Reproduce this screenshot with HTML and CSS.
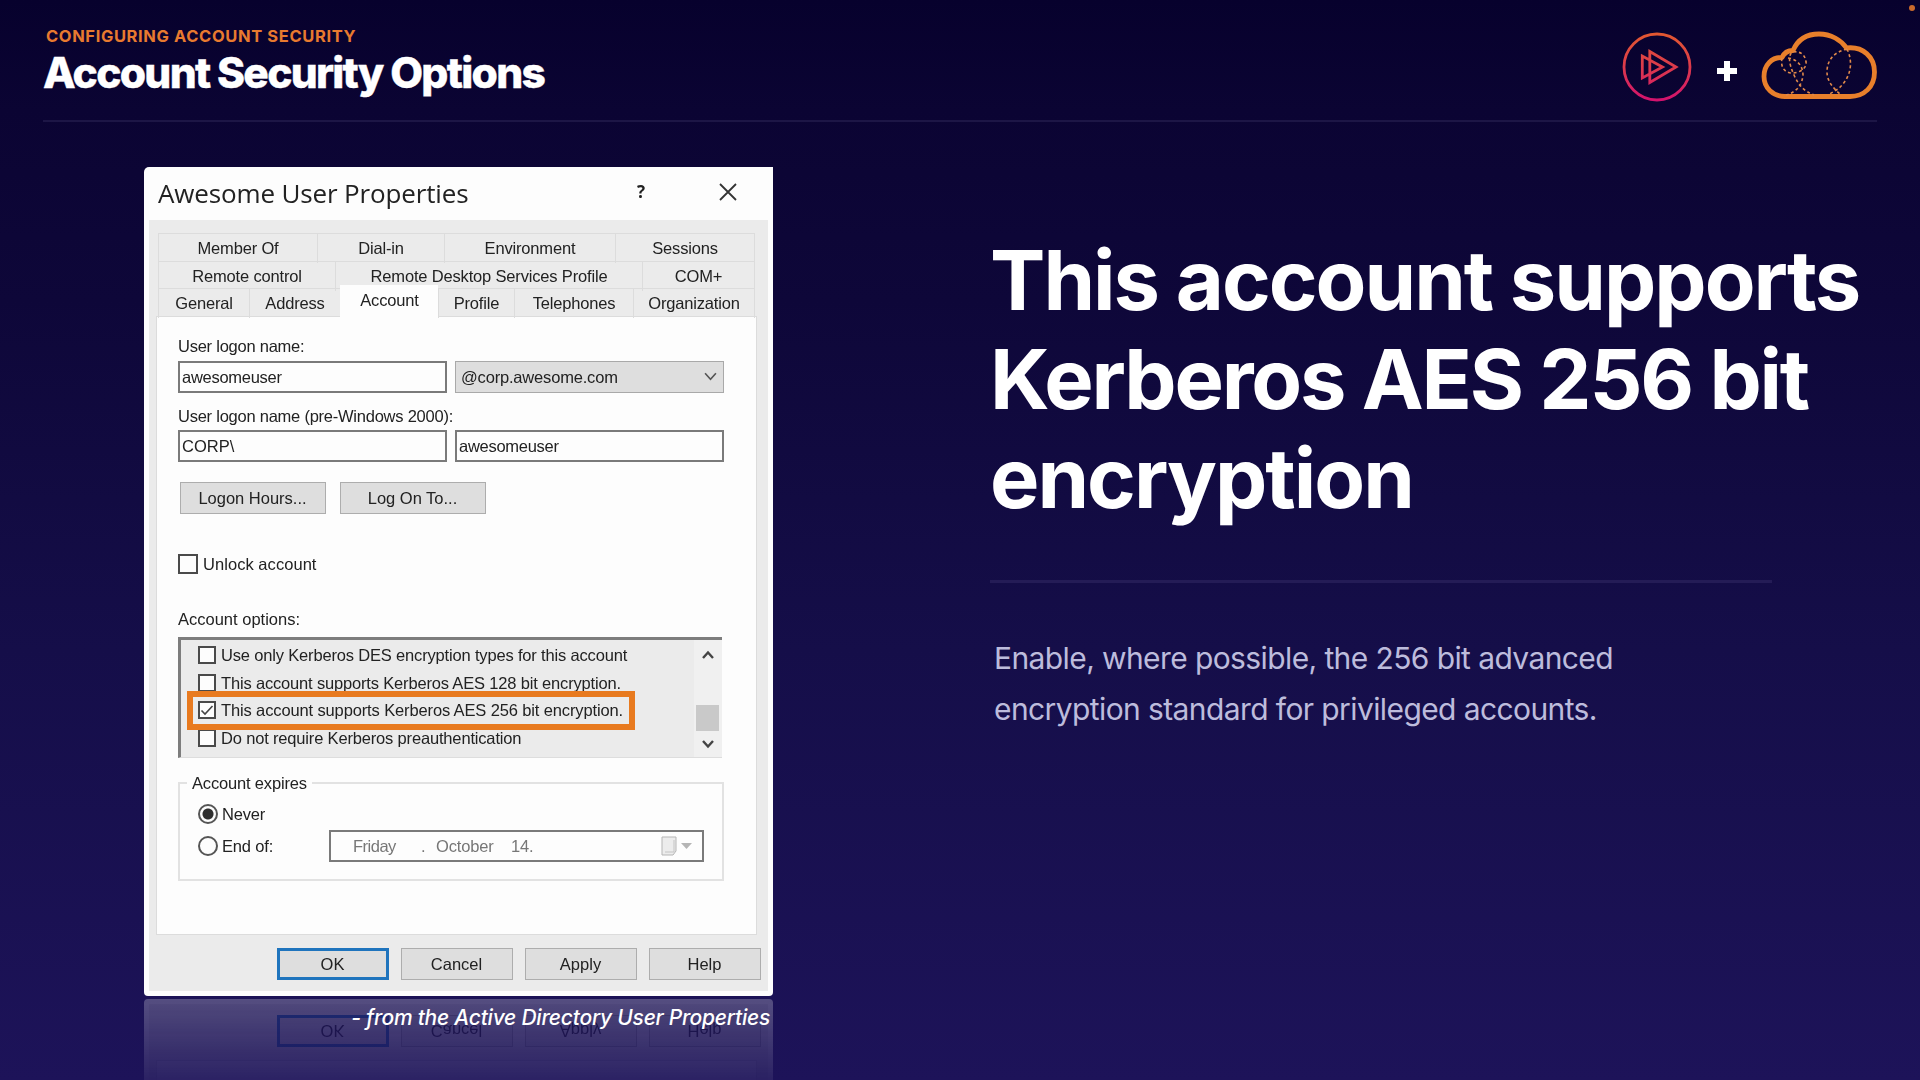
FILE: index.html
```html
<!DOCTYPE html>
<html lang="en">
<head>
<meta charset="utf-8">
<title>Account Security Options</title>
<link rel="stylesheet" href="styles.css">
</head>
<body>
<div class="slide">
  <header class="header">
    <div class="heading">
      <p class="eyebrow">CONFIGURING ACCOUNT SECURITY</p>
      <h1 class="title">Account Security Options</h1>
    </div>
    <div class="logos">
      <svg class="logo-play" viewBox="0 0 70 70">
        <defs><linearGradient id="play" x1="0" y1="0" x2="0" y2="70" gradientUnits="userSpaceOnUse"><stop offset="0" stop-color="#e2592f"/><stop offset=".5" stop-color="#dc3a4c"/><stop offset="1" stop-color="#d3106f"/></linearGradient></defs>
        <g fill="none" stroke="url(#play)" stroke-width="2.8"><circle cx="35" cy="35" r="33"/><path d="M27.800 19.500V50.500L54 35ZM20.300 24V46L40.500 35Z"/></g>
      </svg>
      <svg class="logo-plus" viewBox="0 0 20 20"><path d="M7 0h6v7h7v6h-7v7H7v-7H0V7h7z" fill="#fff"/></svg>
      <svg class="logo-cloud" viewBox="0 0 116 70">
        <path d="M24 65.500C12 65.500 3 57 3 45.500C3 34 11 26 21 26.500C23 22 27 19.500 32 19.500C37 8 46 3 58 3C70 3 80 9 85.500 17C102 15 113.500 26 113.500 41C113.500 56 103 65.500 89 65.500Z" fill="none" stroke="#e87f2b" stroke-width="4.800" stroke-linejoin="round"/>
        <g fill="none" stroke="#e0894a" stroke-width="1.600" stroke-dasharray="3 2.600"><path d="M21 27C19 36 24 42 31 42C39 42 46 37 45 31C44 23 39 20 31 21C27 25 28 33 33 44C38 55 43 60 53 64"/><path d="M27 27C36 28 42 35 42 44C41 54 36 61 25 64"/><path d="M86 18C73 21 66 29 66 41C66 50 72 57 80 64"/><path d="M86 18C92 30 91 46 77 58L67 64"/></g>
      </svg>
    </div>
    <i class="corner-dot"></i>
  </header>

  <main class="content">
    <figure class="shot">
      <div class="dialog">
        <div class="titlebar">
          <span class="dialog-title">Awesome User Properties</span>
          <b class="help">?</b>
          <svg class="close" viewBox="0 0 18 18"><path d="M1 1L17 17M17 1L1 17" stroke="#333" stroke-width="1.800"/></svg>
        </div>
        <div class="dialog-body">
          <div class="tabs">
            <div class="tab-row row-a"><span>Member Of</span><span>Dial-in</span><span>Environment</span><span>Sessions</span></div>
            <div class="tab-row row-b"><span>Remote control</span><span>Remote Desktop Services Profile</span><span>COM+</span></div>
            <div class="tab-row row-c"><span>General</span><span>Address</span><span class="active">Account</span><span>Profile</span><span>Telephones</span><span>Organization</span></div>
          </div>
          <div class="panel">
            <p class="label label-first">User logon name:</p>
            <div class="fields">
              <div class="field"><span>awesomeuser</span></div>
              <div class="field select"><span>@corp.awesome.com</span><svg viewBox="0 0 12 8"><path d="M1 1l5 5.500L11 1" fill="none" stroke="#555" stroke-width="1.500"/></svg></div>
            </div>
            <p class="label label-second">User logon name (pre-Windows 2000):</p>
            <div class="fields">
              <div class="field"><span class="corp">CORP\</span></div>
              <div class="field"><span>awesomeuser</span></div>
            </div>
            <div class="small-buttons"><div class="btn">Logon Hours...</div><div class="btn">Log On To...</div></div>
            <div class="unlock"><i class="check big"></i><span>Unlock account</span></div>
            <p class="label-options">Account options:</p>
            <div class="options">
              <div class="option-list">
                <div class="option"><i class="check"></i><span>Use only Kerberos DES encryption types for this account</span></div>
                <div class="option"><i class="check"></i><span>This account supports Kerberos AES 128 bit encryption.</span></div>
                <div class="option marked"><i class="check"><svg viewBox="0 0 14 14"><path d="M1.500 7.500L5 11L12.500 3" fill="none" stroke="#444" stroke-width="1.600"/></svg></i><span>This account supports Kerberos AES 256 bit encryption.</span></div>
                <div class="option"><i class="check"></i><span>Do not require Kerberos preauthentication</span></div>
              </div>
              <div class="scrollbar">
                <svg viewBox="0 0 12 9"><path d="M1 7.500l5-5.500 5 5.500" fill="none" stroke="#444" stroke-width="2.400"/></svg>
                <i class="thumb"></i>
                <svg viewBox="0 0 12 9"><path d="M1 1.500l5 5.500 5-5.500" fill="none" stroke="#444" stroke-width="2.400"/></svg>
              </div>
            </div>
            <fieldset class="expires">
              <legend>Account expires</legend>
              <div class="radio-row"><i class="radio on"></i><span>Never</span></div>
              <div class="radio-row end"><i class="radio"></i><span class="end-label">End of:</span>
                <div class="date"><span class="day">Friday</span><span class="comma">.</span><span class="month">October</span><span class="number">14.</span>
                  <svg viewBox="0 0 32 20"><path d="M1 1h14v14l-3 4H1z" fill="#ececec" stroke="#b5b5b5"/><path d="M4 16h9V4" fill="none" stroke="#c4c4c4"/><path d="M20 7h11l-5.500 6z" fill="#b5b5b5"/></svg>
                </div>
              </div>
            </fieldset>
          </div>
          <div class="actions"><div class="btn primary">OK</div><div class="btn">Cancel</div><div class="btn">Apply</div><div class="btn">Help</div></div>
        </div>
      </div>
      <figcaption class="caption">- from the Active Directory User Properties</figcaption>
    </figure>
    <section class="message">
      <h2>This account supports<br><span class="tight">Kerberos AES 256 bit</span><br>encryption</h2>
      <p>Enable, where possible, the 256 bit advanced<br>encryption standard for privileged accounts.</p>
    </section>
  </main>
</div>
</body>
</html>
```
FILE: styles.css
```css
*, *::before, *::after { box-sizing: border-box; }
html, body { margin: 0; height: 100%; }
p, h1, h2, figure { margin: 0; }

.slide {
  display: flex;
  flex-direction: column;
  position: relative;
  width: 1920px;
  height: 1080px;
  overflow: hidden;
  background: linear-gradient(#07012d 0, #0b0433 110px, #0e0739 300px, #150e49 650px, #1d1359 1080px);
  color: #fff;
  font-family: Inter, sans-serif;
}

/* Header */
.header {
  display: flex;
  justify-content: space-between;
  height: 122px;
  margin: 0 43px;
  border-bottom: 2px solid #1d1646;
}
.heading { padding: 25px 0 0 3px; }
.eyebrow { color: #e87a2f; font-size: 16.5px; line-height: 22px; font-weight: 700; letter-spacing: .62px; }
.title { margin: 2px 0 0 -3px; font-size: 42.5px; line-height: 48px; font-weight: 800; letter-spacing: -1.72px; -webkit-text-stroke: .4px #fff; }
.logos { display: flex; align-items: flex-start; }
.logo-play { width: 70px; height: 70px; margin: 32px 25px 0 0; }
.logo-plus { width: 20px; height: 20px; margin: 61px 24px 0 0; }
.logo-cloud { width: 116px; height: 70px; margin: 31px 0 0; }
.corner-dot { position: absolute; top: 5px; right: 5px; width: 6px; height: 6px; border-radius: 50%; background: #c96a2c; }

.content { display: flex; align-items: flex-start; padding: 45px 0 0 144px; }
.shot { position: relative; width: 629px; }

/* Properties dialog */
.dialog {
  height: 829px;
  padding: 0 5px 5px;
  border-radius: 5px 0 4px 4px;
  background: #fdfdfd;
  color: #222;
  font: 16.5px/20px "Liberation Sans", Arial, sans-serif;
  letter-spacing: -.17px;
  -webkit-box-reflect: below 3px linear-gradient(transparent 87%, rgba(0, 0, 0, .26));
}
.titlebar { display: flex; align-items: center; height: 53px; padding: 0 31px 3px 9px; }
.dialog-title { flex: 1; padding-top: 2px; font: 26px/36px "Open Sans", sans-serif; letter-spacing: -.15px; }
.help { margin-right: 74px; font: 700 17px/20px "Open Sans", sans-serif; }
.close { width: 18px; height: 18px; }
.dialog-body { height: 771px; padding-top: 13px; background: #ebebeb; }

.tabs { padding: 0 13px 0 9px; }
.tab-row { display: grid; height: 27.5px; }
.tab-row span { border-top: 1px solid #dcdcdc; border-left: 1px solid #dcdcdc; text-align: center; line-height: 29px; }
.tab-row span:last-child { border-right: 1px solid #dcdcdc; }
.row-a { grid-template-columns: 159px 127px 171px 140px; }
.row-b { grid-template-columns: 177px 307px 113px; }
.row-c { grid-template-columns: 91px 91px 98px 76px 119px 122px; }
.row-c .active { margin-top: -3px; border-color: #fdfdfd; background: #fdfdfd; z-index: 1; }

.panel { width: 601px; height: 619px; margin-left: 7px; padding: 19px 0 0 21px; border: 1px solid #dcdcdc; background: #fdfdfd; }
.label { letter-spacing: -.24px; }
.label-first { margin-bottom: 5px; }
.label-second { margin: 13px 0 4px; }
.fields { display: flex; gap: 8px; }
.field { display: flex; align-items: center; width: 269px; height: 32px; padding: 0 2px; border: 2px solid #7a7a7a; letter-spacing: -.28px; }
.field .corp { letter-spacing: 0; }
.select { justify-content: space-between; padding: 0 6px 0 5px; border: 1px solid #a9a9a9; background: #dedede; letter-spacing: -.18px; }
.select svg { width: 13px; height: 9px; }
.small-buttons { display: flex; gap: 14px; margin: 20px 0 0 2px; }
.btn { display: flex; justify-content: center; align-items: center; width: 146px; height: 32px; padding-right: 1px; border: 1px solid #adadad; background: #dedede; letter-spacing: 0; }
.unlock { display: flex; align-items: center; gap: 5px; height: 20px; margin-top: 40px; letter-spacing: .05px; }
.check { display: block; flex: none; width: 18px; height: 18px; border: 2px solid #4a4a4a; background: #fdfdfd; }
.check svg { display: block; width: 14px; height: 14px; }
.check.big { width: 20px; height: 20px; }
.label-options { margin: 35px 0 8px; letter-spacing: 0; }

.options { display: flex; width: 544px; height: 121px; border-top: 3px solid #7d7d7d; border-left: 3px solid #7d7d7d; border-bottom: 1px solid #ddd; background: #ebebeb; }
.option-list { width: 513px; padding: 2px 0 0 17px; }
.option { display: flex; align-items: center; gap: 5px; height: 27.5px; }
.marked { position: relative; letter-spacing: -.13px; }
.marked::after { content: ""; position: absolute; left: -11px; top: -6px; width: 448px; height: 39px; border: 6px solid #e87a1f; }
.scrollbar { display: flex; flex-direction: column; align-items: center; flex: 1; padding: 10px 1px 8px 0; background: #f0f0f0; }
.scrollbar svg { width: 12px; height: 10px; }
.thumb { width: 23px; height: 26px; margin: 45px 0 8px; background: #c9c9c9; }

.expires { width: 546px; height: 108px; margin: 15px 0 0; padding: 11px 0 0 18px; border: 2px solid #e2e2e2; }
.expires legend { margin-left: -11px; padding: 0 5px; }
.radio-row { display: flex; align-items: center; gap: 4px; height: 20px; }
.radio { flex: none; width: 20px; height: 20px; border: 2px solid #555; border-radius: 50%; }
.radio.on { background: radial-gradient(circle, #2f2f2f 5px, transparent 6px); }
.end { height: 32px; margin-top: 6px; }
.end-label { width: 103px; }
.date { display: flex; align-items: center; width: 375px; height: 32px; border: 2px solid #7a7a7a; padding-left: 22px; color: #777; }
.day { width: 68px; letter-spacing: -.5px; }
.comma { width: 15px; }
.month { width: 75px; }
.number { width: 150px; }
.date svg { width: 32px; height: 20px; }

.actions { display: flex; gap: 12px; padding: 13px 0 0 128px; }
.actions .btn { width: 112px; }
.actions .primary { border: 3px solid #1f74bd; }

.caption { position: absolute; right: 3px; top: 837px; white-space: nowrap; font-size: 21px; line-height: 28px; font-style: italic; font-weight: 500; letter-spacing: -.24px; }

/* Message */
.message { width: 900px; padding: 64px 0 0; margin-left: 217px; }
.message h2 { width: 782px; height: 352px; border-bottom: 3px solid #241c56; white-space: nowrap; font-size: 83px; line-height: 99px; font-weight: 700; letter-spacing: -2px; }
.message .tight { letter-spacing: -2.2px; }
.message p { margin: 50px 0 0 4px; color: #bdbcdc; font-size: 30px; line-height: 50.5px; letter-spacing: -.6px; white-space: nowrap; }
```
